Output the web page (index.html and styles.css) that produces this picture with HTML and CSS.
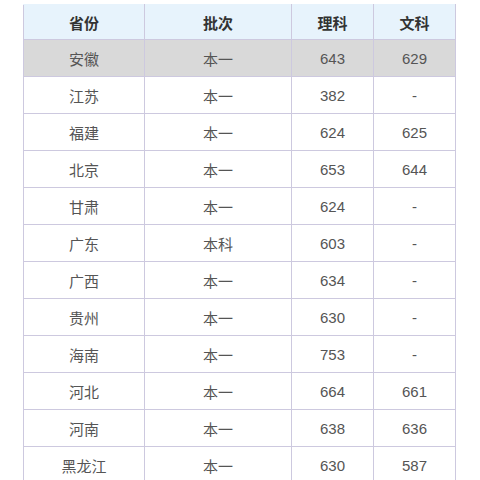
FILE: index.html
```html
<!DOCTYPE html>
<html lang="zh">
<head>
<meta charset="utf-8">
<link rel="stylesheet" href="styles.css">
</head>
<body>
<table class="score-table">
  <colgroup>
    <col class="c1"><col class="c2"><col class="c3"><col class="c4">
  </colgroup>
  <thead>
    <tr><th>省份</th><th>批次</th><th>理科</th><th>文科</th></tr>
  </thead>
  <tbody>
    <tr class="hl"><td>安徽</td><td>本一</td><td>643</td><td>629</td></tr>
    <tr><td>江苏</td><td>本一</td><td>382</td><td>-</td></tr>
    <tr><td>福建</td><td>本一</td><td>624</td><td>625</td></tr>
    <tr><td>北京</td><td>本一</td><td>653</td><td>644</td></tr>
    <tr><td>甘肃</td><td>本一</td><td>624</td><td>-</td></tr>
    <tr><td>广东</td><td>本科</td><td>603</td><td>-</td></tr>
    <tr><td>广西</td><td>本一</td><td>634</td><td>-</td></tr>
    <tr><td>贵州</td><td>本一</td><td>630</td><td>-</td></tr>
    <tr><td>海南</td><td>本一</td><td>753</td><td>-</td></tr>
    <tr><td>河北</td><td>本一</td><td>664</td><td>661</td></tr>
    <tr><td>河南</td><td>本一</td><td>638</td><td>636</td></tr>
    <tr><td>黑龙江</td><td>本一</td><td>630</td><td>587</td></tr>
  </tbody>
</table>
</body>
</html>
```

FILE: styles.css
```css
html, body {
  margin: 0;
  padding: 0;
  background: #ffffff;
}
body {
  padding: 4px 0 0 23px;
  font-family: "Liberation Sans", "Noto Sans CJK SC", sans-serif;
}
.score-table {
  border-collapse: collapse;
  table-layout: fixed;
  width: 433px;
  font-size: 15px;
}
.c1 { width: 121px; }
.c2 { width: 147px; }
.c3 { width: 82px; }
.c4 { width: 82px; }
.score-table th,
.score-table td {
  border: 1px solid #cdc9df;
  text-align: center;
  vertical-align: middle;
  padding: 0;
}
.score-table thead th {
  height: 34px;
  background: #e7f3fc;
  color: #333333;
  font-weight: bold;
  border-top-color: #e7f3fc;
}
.score-table tbody td {
  height: 36px;
  color: #555555;
}
.score-table tbody tr.hl td {
  background: #d9d9d9;
}
```
